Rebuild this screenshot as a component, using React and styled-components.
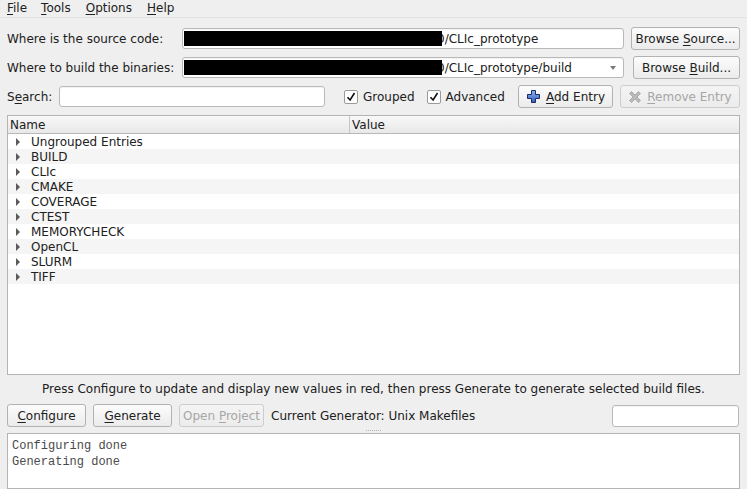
import React from "react";
import styled, { createGlobalStyle } from "styled-components";

const GlobalStyle = createGlobalStyle`
  html, body {
    margin: 0;
    padding: 0;
    background: #efefef;
  }
  body {
    font-family: "DejaVu Sans", "Noto Sans", sans-serif;
    font-size: 12px;
    color: #202020;
    overflow: hidden;
  }
`;

const Window = styled.div`
  width: 747px;
  height: 489px;
  display: flex;
  flex-direction: column;
  overflow: hidden;
  background: #efefef;
`;

const MenuBar = styled.div`
  display: flex;
  height: 17px;
  border-bottom: 1px solid #e3e3e3;
`;

const MenuItem = styled.span`
  padding: 1px 7px 0;
  line-height: 15px;
  margin-right: ${(p) => p.$mr || 0}px;
`;

const U = styled.span`
  text-decoration: underline;
  text-underline-offset: 2px;
`;

const Main = styled.div`
  flex: 1;
  min-height: 0;
  display: flex;
  flex-direction: column;
  padding: 9px 7px 0 7px;
`;

const Row = styled.div`
  display: flex;
  align-items: center;
  height: 23px;
  margin-top: ${(p) => p.$mt || 0}px;
  flex-shrink: 0;
`;

const Label = styled.span`
  width: ${(p) => p.$w}px;
  flex-shrink: 0;
  white-space: nowrap;
`;

const Field = styled.div`
  box-sizing: border-box;
  width: ${(p) => p.$w}px;
  height: ${(p) => p.$h || 21}px;
  flex-shrink: 0;
  background: #fff;
  border: 1px solid #b9b9b9;
  border-radius: 3px;
  box-shadow: inset 0 1px 1px rgba(0, 0, 0, 0.05);
  display: flex;
  align-items: center;
  padding: 0 1px;
  overflow: hidden;
  white-space: nowrap;
  margin-left: ${(p) => (p.$auto ? "auto" : `${p.$ml || 0}px`)};
  margin-right: ${(p) => p.$mr || 0}px;
`;

const Redacted = styled.span`
  display: inline-block;
  width: 258px;
  height: 15px;
  background: #000;
  position: relative;
  z-index: 1;
  flex-shrink: 0;
`;

const PathText = styled.span`
  margin-left: -5px;
`;

const ComboArrow = styled.span`
  margin-left: auto;
  margin-right: 6px;
  width: 0;
  height: 0;
  border-left: 3.5px solid transparent;
  border-right: 3.5px solid transparent;
  border-top: 4px solid #7a7a7a;
`;

const Button = styled.button`
  box-sizing: border-box;
  width: ${(p) => p.$w}px;
  height: 23px;
  flex-shrink: 0;
  font: inherit;
  color: ${(p) => (p.disabled ? "#a6a6a6" : "#202020")};
  background: ${(p) =>
    p.disabled
      ? "linear-gradient(#f4f4f4, #ececec)"
      : "linear-gradient(#fcfcfc, #ebebeb)"};
  border: 1px solid ${(p) => (p.disabled ? "#cdcdcd" : "#b2b2b2")};
  border-radius: 3px;
  padding: 0;
  display: flex;
  align-items: center;
  justify-content: center;
  gap: 5px;
  white-space: nowrap;
  margin-left: ${(p) => (p.$auto ? "auto" : `${p.$ml || 0}px`)};
`;

const Check = styled.label`
  display: flex;
  align-items: center;
  gap: 5px;
  margin-left: ${(p) => p.$ml}px;
`;

const Box = styled.span`
  box-sizing: border-box;
  width: 14px;
  height: 14px;
  background: #fff;
  border: 1px solid #9a9a9a;
  border-radius: 2px;
  display: flex;
  align-items: center;
  justify-content: center;
`;

const Tree = styled.div`
  box-sizing: border-box;
  height: 260px;
  margin-top: 7px;
  flex-shrink: 0;
  background: #fff;
  border: 1px solid #b4b4b4;
  display: flex;
  flex-direction: column;
`;

const Header = styled.div`
  display: flex;
  height: 17px;
  background: linear-gradient(#f8f8f8, #e8e8e8);
  border-bottom: 1px solid #b8b8b8;
`;

const HeaderCell = styled.div`
  box-sizing: border-box;
  width: ${(p) => (p.$w ? `${p.$w}px` : "auto")};
  flex: ${(p) => (p.$w ? "none" : 1)};
  padding: 2px 0 0 2px;
  line-height: 15px;
  border-right: ${(p) => (p.$w ? "1px solid #c6c6c6" : "none")};
`;

const TreeRow = styled.div`
  box-sizing: border-box;
  display: flex;
  align-items: center;
  height: 15px;
  padding-top: 1px;
  line-height: 14px;
  background: ${(p) => (p.$alt ? "#f5f5f5" : "#fff")};
`;

const Expander = styled.span`
  margin-left: 8px;
  margin-right: 11px;
  margin-top: -1px;
  width: 0;
  height: 0;
  border-top: 4px solid transparent;
  border-bottom: 4px solid transparent;
  border-left: 4px solid #5a5a5a;
`;

const Message = styled.div`
  margin-top: 6px;
  height: 16px;
  line-height: 16px;
  text-align: center;
  flex-shrink: 0;
`;

const Generator = styled.span`
  margin-left: 7px;
  white-space: nowrap;
`;

const Splitter = styled.div`
  height: 6px;
  flex-shrink: 0;
  display: flex;
  align-items: center;
  justify-content: center;
`;

const Grip = styled.span`
  width: 15px;
  border-top: 1px dotted #b4b4b4;
`;

const Output = styled.div`
  flex: 1;
  background: #fff;
  border: 1px solid #b4b4b4;
  padding: 4px 4px 0;
  font-family: "Liberation Mono", "DejaVu Sans Mono", monospace;
  font-size: 12px;
  line-height: 16px;
  color: #4a4a4a;
  white-space: pre;
`;

function PlusIcon() {
  return (
    <svg width="15" height="15" viewBox="0 0 15 15">
      <defs>
        <linearGradient id="plusFill" x1="0" y1="0" x2="0" y2="1">
          <stop offset="0" stopColor="#8fb2ec" />
          <stop offset="1" stopColor="#2f5fc0" />
        </linearGradient>
      </defs>
      <path
        d="M5.5 1.5h4v4h4v4h-4v4h-4v-4h-4v-4h4z"
        fill="url(#plusFill)"
        stroke="#1a2a66"
        strokeWidth="1"
        strokeLinejoin="round"
      />
    </svg>
  );
}

function CrossIcon() {
  return (
    <svg width="14" height="14" viewBox="0 0 14 14">
      <path
        d="M1.5 3.5l2-2 3.5 3.5 3.5-3.5 2 2-3.5 3.5 3.5 3.5-2 2-3.5-3.5-3.5 3.5-2-2 3.5-3.5z"
        fill="#b9b9b9"
        stroke="#a2a2a2"
        strokeWidth="0.8"
        strokeLinejoin="round"
      />
    </svg>
  );
}

function Tick() {
  return (
    <svg width="10" height="10" viewBox="0 0 10 10">
      <path d="M1.5 5.2l2.6 2.8 4.4-7" fill="none" stroke="#111" strokeWidth="1.6" />
    </svg>
  );
}

const groups = [
  "Ungrouped Entries",
  "BUILD",
  "CLIc",
  "CMAKE",
  "COVERAGE",
  "CTEST",
  "MEMORYCHECK",
  "OpenCL",
  "SLURM",
  "TIFF",
];

export default function App() {
  return (
    <Window>
      <GlobalStyle />
      <MenuBar>
        <MenuItem>
          <U>F</U>ile
        </MenuItem>
        <MenuItem $mr={1}>
          <U>T</U>ools
        </MenuItem>
        <MenuItem $mr={1}>
          <U>O</U>ptions
        </MenuItem>
        <MenuItem>
          <U>H</U>elp
        </MenuItem>
      </MenuBar>
      <Main>
        <Row>
          <Label $w={175}>Where is the source code:</Label>
          <Field $w={442}>
            <Redacted />
            <PathText>0/CLIc_prototype</PathText>
          </Field>
          <Button $w={109} $ml={7}>
            <span>
              Browse <U>S</U>ource...
            </span>
          </Button>
        </Row>
        <Row $mt={6}>
          <Label $w={175}>Where to build the binaries:</Label>
          <Field $w={442}>
            <Redacted />
            <PathText>0/CLIc_prototype/build</PathText>
            <ComboArrow />
          </Field>
          <Button $w={107} $ml={9}>
            <span>
              Browse <U>B</U>uild...
            </span>
          </Button>
        </Row>
        <Row $mt={6}>
          <Label $w={52}>
            S<U>e</U>arch:
          </Label>
          <Field $w={266} />
          <Check $ml={19}>
            <Box>
              <Tick />
            </Box>
            Grouped
          </Check>
          <Check $ml={12}>
            <Box>
              <Tick />
            </Box>
            Advanced
          </Check>
          <Button $w={95} $auto>
            <PlusIcon />
            <span>
              <U>A</U>dd Entry
            </span>
          </Button>
          <Button $w={120} $ml={7} disabled>
            <CrossIcon />
            <span>
              <U>R</U>emove Entry
            </span>
          </Button>
        </Row>
        <Tree>
          <Header>
            <HeaderCell $w={342}>Name</HeaderCell>
            <HeaderCell>Value</HeaderCell>
          </Header>
          {groups.map((g, i) => (
            <TreeRow key={g} $alt={i % 2 === 1}>
              <Expander />
              {g}
            </TreeRow>
          ))}
        </Tree>
        <Message>
          Press Configure to update and display new values in red, then press
          Generate to generate selected build files.
        </Message>
        <Row $mt={7}>
          <Button $w={79}>
            <span>
              <U>C</U>onfigure
            </span>
          </Button>
          <Button $w={79} $ml={7}>
            <span>
              <U>G</U>enerate
            </span>
          </Button>
          <Button $w={85} $ml={7} disabled>
            <span>
              Open <U>P</U>roject
            </span>
          </Button>
          <Generator>Current Generator: Unix Makefiles</Generator>
          <Field $w={127} $h={22} $auto $mr={1} />
        </Row>
        <Splitter>
          <Grip />
        </Splitter>
        <Output>{"Configuring done\nGenerating done"}</Output>
      </Main>
    </Window>
  );
}
